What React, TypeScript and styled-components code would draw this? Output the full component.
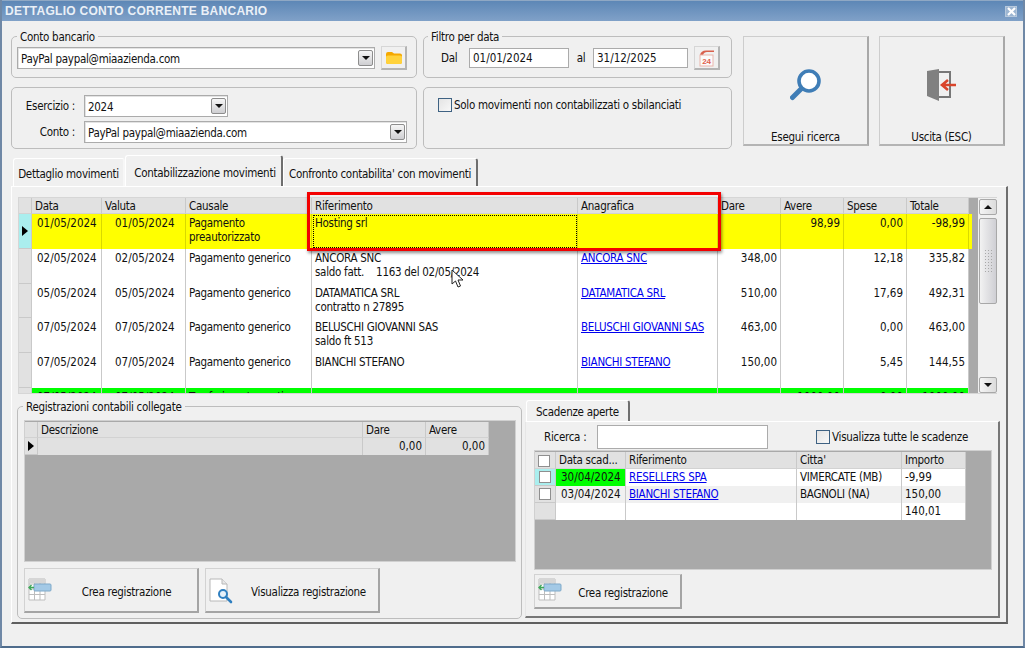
import React from "react";
import styled, { createGlobalStyle } from "styled-components";

const MAIN_COLS = "13px 70px 84px 126px 266px 140px 63px 63px 63px 62px";
const LINKED_COLS = "13px 325px 63px 63px";
const DUE_COLS = "21px 70px 171px 105px 64px";

const movements = [
  { data: "02/05/2024", valuta: "02/05/2024", causale: "Pagamento generico", rif: ["ANCORA SNC", "saldo fatt.    1163 del 02/05/2024"], ana: "ANCORA SNC", dare: "348,00", spese: "12,18", totale: "335,82" },
  { data: "05/05/2024", valuta: "05/05/2024", causale: "Pagamento generico", rif: ["DATAMATICA SRL", "contratto n 27895"], ana: "DATAMATICA SRL", dare: "510,00", spese: "17,69", totale: "492,31" },
  { data: "07/05/2024", valuta: "07/05/2024", causale: "Pagamento generico", rif: ["BELUSCHI GIOVANNI SAS", "saldo ft 513"], ana: "BELUSCHI GIOVANNI SAS", dare: "463,00", spese: "0,00", totale: "463,00" },
  { data: "07/05/2024", valuta: "07/05/2024", causale: "Pagamento generico", rif: ["BIANCHI STEFANO"], ana: "BIANCHI STEFANO", dare: "150,00", spese: "5,45", totale: "144,55" },
];

const FolderIcon = () => (
  <svg width="18" height="14" viewBox="0 0 18 14">
    <path d="M1 3 Q1 1 3 1 H7 L9 2.5 H15 Q17 2.5 17 4.5 V11 Q17 13 15 13 H3 Q1 13 1 11 Z" fill="#f5a800" />
    <path d="M1 6 Q1 4.5 3 4.5 H15 Q17 4.5 17 6 V11 Q17 13 15 13 H3 Q1 13 1 11 Z" fill="#ffd23c" />
  </svg>
);

const CalendarIcon = () => (
  <svg width="18" height="18" viewBox="0 0 18 18">
    <path d="M2 6 Q3 1.5 8 1.5 H16 V3 H9 Q6 3 5 6 Z" fill="#d9604c" />
    <rect x="2" y="6" width="13" height="11" fill="#fbfbfb" stroke="#e9b5ac" />
    <text x="8.5" y="14.5" textAnchor="middle" fontSize="8" fontWeight="bold" fill="#e0604c" fontFamily="Liberation Sans, sans-serif">24</text>
  </svg>
);

const SearchIcon = () => (
  <svg width="32" height="34" viewBox="0 0 32 34">
    <circle cx="19" cy="13" r="10" fill="#fff" stroke="#3f7db6" strokeWidth="3.6" />
    <path d="M10.5 21.5 L2.5 29.5" stroke="#3f7db6" strokeWidth="5" strokeLinecap="round" />
  </svg>
);

const ExitIcon = () => (
  <svg width="32" height="34" viewBox="0 0 32 34">
    <path d="M13 4 H24 V29 H13" fill="none" stroke="#777" strokeWidth="2" />
    <path d="M1 3 L13 1 V33 L1 28 Z" fill="#808080" />
    <path d="M30 17 H17 M22 12 L16 17 L22 22" fill="none" stroke="#d9442b" strokeWidth="2.6" />
  </svg>
);

const TableAddIcon = () => (
  <svg width="24" height="23" viewBox="0 0 24 23">
    <path d="M1 1 H17 V22 H1 Z M1 6 H17 M1 11 H17 M1 16.5 H17 M6.5 1 V22 M12 1 V22" fill="#fff" stroke="#bdbdbd" />
    <rect x="1" y="1" width="16" height="4" fill="#d6d6d6" />
    <rect x="6" y="6" width="17" height="7" rx="1" fill="#a3c9e6" stroke="#7fa9c9" />
    <path d="M6 9.5 H1 M3.5 7 L1 9.5 L3.5 12" fill="none" stroke="#3fa85a" strokeWidth="1.4" />
  </svg>
);

const DocSearchIcon = () => (
  <svg width="26" height="26" viewBox="0 0 26 26">
    <path d="M1 1 H13 L18 6 V23 H1 Z" fill="#fff" stroke="#b8b8b8" />
    <path d="M13 1 V6 H18" fill="#e8e8e8" stroke="#b8b8b8" />
    <circle cx="14" cy="16" r="4" fill="#e6f1fa" stroke="#2f7fc0" strokeWidth="2" />
    <path d="M17 19 L22 24" stroke="#2f7fc0" strokeWidth="2.6" strokeLinecap="round" />
  </svg>
);

const MouseCursor = () => (
  <svg width="14" height="19" viewBox="0 0 14 19">
    <path d="M1 1 V15 L4.5 12 L7 18 L9.5 17 L7 11 H12 Z" fill="#fff" stroke="#222" strokeWidth="1" />
  </svg>
);

export default function App() {
  return (
    <Window>
      <GlobalStyle />
      <TitleBar>
        DETTAGLIO CONTO CORRENTE BANCARIO
        <CloseBox>
          <svg width="9" height="9" viewBox="0 0 9 9">
            <path d="M1 1 L8 8 M8 1 L1 8" stroke="#fff" strokeWidth="2.2" />
          </svg>
        </CloseBox>
      </TitleBar>

      <Body>
        <TopSection>
          <FilterGrid>
            <Group $height={49} $padLeft={5} $legendLeft={0}>
              <legend>Conto bancario</legend>
              <ControlRow>
                <Combo $width={358} $height={22}>
                  PayPal paypal@miaazienda.com
                  <ComboArrow />
                </Combo>
                <IconButton $left={6}>
                  <FolderIcon />
                </IconButton>
              </ControlRow>
            </Group>

            <Group $height={49} $padLeft={17} $legendLeft={-13}>
              <legend>Filtro per data</legend>
              <ControlRow>
                <DateLabel $width={28}>Dal</DateLabel>
                <DateInput readOnly value="01/01/2024" $width={100} />
                <DateLabel $width={24} $center>al</DateLabel>
                <DateInput readOnly value="31/12/2025" $width={95} />
                <IconButton $left={6}>
                  <CalendarIcon />
                </IconButton>
              </ControlRow>
            </Group>

            <PlainBox>
              <FormGrid>
                <FormLabel>Esercizio :</FormLabel>
                <Combo $width={144} $height={22}>
                  2024
                  <ComboArrow />
                </Combo>
                <FormLabel>Conto :</FormLabel>
                <Combo $width={323} $height={22}>
                  PayPal paypal@miaazienda.com
                  <ComboArrow />
                </Combo>
              </FormGrid>
            </PlainBox>

            <PlainBox>
              <CheckRow>
                <CheckBox $accent />
                Solo movimenti non contabilizzati o sbilanciati
              </CheckRow>
            </PlainBox>
          </FilterGrid>

          <BigButton $left={11}>
            <SearchIcon />
            <span>Esegui ricerca</span>
          </BigButton>
          <BigButton $left={10}>
            <ExitIcon />
            <span>Uscita (ESC)</span>
          </BigButton>
        </TopSection>

        <TabStrip>
          <Tab $width={112} $height={28}>Dettaglio movimenti</Tab>
          <Tab $width={158} $height={31} $dark $active>Contabilizzazione movimenti</Tab>
          <Tab $width={195} $height={28} $dark>Confronto contabilita' con movimenti</Tab>
        </TabStrip>

        <TabPanel>
          <GridFrame>
            <GridBody>
              <Row $cols={MAIN_COLS}>
                <HeaderCell />
                <HeaderCell>Data</HeaderCell>
                <HeaderCell>Valuta</HeaderCell>
                <HeaderCell>Causale</HeaderCell>
                <HeaderCell>Riferimento</HeaderCell>
                <HeaderCell>Anagrafica</HeaderCell>
                <HeaderCell>Dare</HeaderCell>
                <HeaderCell>Avere</HeaderCell>
                <HeaderCell>Spese</HeaderCell>
                <HeaderCell>Totale</HeaderCell>
              </Row>

              <YellowRow $cols={MAIN_COLS}>
                <Indicator $current $selected />
                <Cell $num $bg="#ffff00" $line="#d9d900" $left={5}>01/05/2024</Cell>
                <Cell $num $bg="#ffff00" $line="#d9d900" $left={13}>01/05/2024</Cell>
                <Cell $bg="#ffff00" $line="#d9d900" $left={3}>Pagamento<br />preautorizzato</Cell>
                <FocusCell>Hosting srl</FocusCell>
                <Cell $bg="#ffff00" $line="#d9d900" />
                <Cell $bg="#ffff00" $line="#d9d900" />
                <Cell $num $bg="#ffff00" $line="#d9d900" $right>98,99</Cell>
                <Cell $num $bg="#ffff00" $line="#d9d900" $right>0,00</Cell>
                <Cell $num $bg="#ffff00" $line="#d9d900" $right>-98,99</Cell>
              </YellowRow>

              {movements.map((m, i) => (
                <Row $cols={MAIN_COLS} key={i}>
                  <Indicator />
                  <Cell $num $left={5}>{m.data}</Cell>
                  <Cell $num $left={13}>{m.valuta}</Cell>
                  <Cell $left={3}>{m.causale}</Cell>
                  <Cell $left={3}>
                    {m.rif.map((line) => (
                      <div key={line}>{line}</div>
                    ))}
                  </Cell>
                  <Cell $left={3}><Link>{m.ana}</Link></Cell>
                  <Cell $num $right>{m.dare}</Cell>
                  <Cell $right />
                  <Cell $num $right>{m.spese}</Cell>
                  <Cell $num $right>{m.totale}</Cell>
                </Row>
              ))}

              <Row $cols={MAIN_COLS}>
                <Indicator />
                <Cell $num $bg="#00ff00" $left={5}>07/05/2024</Cell>
                <Cell $num $bg="#00ff00" $left={13}>07/05/2024</Cell>
                <Cell $bg="#00ff00" $left={3}>Trasferimento conti</Cell>
                <Cell $bg="#00ff00" />
                <Cell $bg="#00ff00" />
                <Cell $bg="#00ff00" />
                <Cell $num $bg="#00ff00" $right>1000,00</Cell>
                <Cell $num $bg="#00ff00" $right>0,00</Cell>
                <Cell $num $bg="#00ff00" $right>-1000,00</Cell>
              </Row>
            </GridBody>

            <ScrollBar>
              <ScrollArrow $up />
              <ScrollThumb>
                <ThumbGrip />
              </ScrollThumb>
              <ScrollArrow />
            </ScrollBar>

            <Highlight />
            <CursorMark>
              <MouseCursor />
            </CursorMark>
          </GridFrame>

          <LowerSection>
            <Group $height={220} $width={505} $padLeft={6} $legendLeft={-1}>
              <legend>Registrazioni contabili collegate</legend>
              <DarkGrid $width={492} $height={142} $top={6}>
                <Row $cols={LINKED_COLS}>
                  <HeaderCell />
                  <HeaderCell>Descrizione</HeaderCell>
                  <HeaderCell>Dare</HeaderCell>
                  <HeaderCell>Avere</HeaderCell>
                </Row>
                <Row $cols={LINKED_COLS}>
                  <Indicator $current $compact />
                  <Cell $bg="#e1e1e1" $compact />
                  <Cell $num $bg="#e1e1e1" $compact $right>0,00</Cell>
                  <Cell $num $bg="#e1e1e1" $compact $right>0,00</Cell>
                </Row>
              </DarkGrid>
              <ButtonRow>
                <ActionButton $width={175} $height={45} $iconTop={9}>
                  <TableAddIcon />
                  <span>Crea registrazione</span>
                </ActionButton>
                <ActionButton $width={175} $height={45} $iconTop={9}>
                  <DocSearchIcon />
                  <span>Visualizza registrazione</span>
                </ActionButton>
              </ButtonRow>
            </Group>

            <DueColumn>
              <SmallTab>Scadenze aperte</SmallTab>
              <DuePanel>
                <SearchRow>
                  <SearchLabel>Ricerca :</SearchLabel>
                  <SearchInput readOnly value="" />
                  <CheckRow $inline>
                    <CheckBox $accent />
                    Visualizza tutte le scadenze
                  </CheckRow>
                </SearchRow>
                <DarkGrid $width={458} $height={120} $top={1}>
                  <Row $cols={DUE_COLS}>
                    <HeaderCell $compact><CheckBox /></HeaderCell>
                    <HeaderCell $compact>Data scad...</HeaderCell>
                    <HeaderCell $compact>Riferimento</HeaderCell>
                    <HeaderCell $compact>Citta'</HeaderCell>
                    <HeaderCell $compact>Importo</HeaderCell>
                  </Row>
                  <Row $cols={DUE_COLS}>
                    <Indicator $selected $compact><CheckBox /></Indicator>
                    <Cell $num $compact $bg="#00ff00" $left={5}>30/04/2024</Cell>
                    <Cell $compact $left={3}><Link>RESELLERS SPA</Link></Cell>
                    <Cell $compact $left={3}>VIMERCATE (MB)</Cell>
                    <Cell $num $compact $left={3}>-9,99</Cell>
                  </Row>
                  <Row $cols={DUE_COLS}>
                    <Indicator $compact><CheckBox /></Indicator>
                    <Cell $num $compact $bg="#f0f0f0" $left={5}>03/04/2024</Cell>
                    <Cell $compact $bg="#f0f0f0" $left={3}><Link>BIANCHI STEFANO</Link></Cell>
                    <Cell $compact $bg="#f0f0f0" $left={3}>BAGNOLI (NA)</Cell>
                    <Cell $num $compact $bg="#f0f0f0" $left={3}>150,00</Cell>
                  </Row>
                  <Row $cols={DUE_COLS}>
                    <Indicator $compact />
                    <Cell $compact />
                    <Cell $compact />
                    <Cell $compact />
                    <Cell $num $compact $left={3}>140,01</Cell>
                  </Row>
                </DarkGrid>
                <DueButtonRow>
                  <ActionButton $width={148} $height={35} $iconTop={3}>
                    <TableAddIcon />
                    <span>Crea registrazione</span>
                  </ActionButton>
                </DueButtonRow>
              </DuePanel>
            </DueColumn>
          </LowerSection>
        </TabPanel>
      </Body>
    </Window>
  );
}

const GlobalStyle = createGlobalStyle`
  html, body {
    margin: 0;
    padding: 0;
    overflow: hidden;
    background: #f0f0f0;
  }
  * {
    box-sizing: border-box;
  }
`;

const Window = styled.div`
  position: relative;
  width: 1025px;
  height: 648px;
  display: flex;
  flex-direction: column;
  background: #f0f0f0;
  border-left: 2px solid #6f88a6;
  border-right: 2px solid #6f88a6;
  border-bottom: 2px solid #4f6c8c;
  font-family: "DejaVu Sans Condensed", "DejaVu Sans", "Liberation Sans", sans-serif;
  font-stretch: condensed;
  font-size: 11.5px;
  letter-spacing: -0.28px;
  color: #111;
`;

const TitleBar = styled.div`
  height: 21px;
  flex: none;
  display: flex;
  align-items: center;
  justify-content: space-between;
  padding: 0 6px 0 3px;
  background: linear-gradient(#5d87b6, #80a1c8);
  border-top: 1px solid #8fa8c4;
  color: #eaf0f7;
  font-family: "Liberation Sans", sans-serif;
  font-size: 12px;
  font-stretch: normal;
  font-weight: bold;
  letter-spacing: 0.27px;
`;

const CloseBox = styled.div`
  width: 12px;
  height: 11px;
  display: flex;
  align-items: center;
  justify-content: center;
  background: #9db6d2;
  border: 1px solid #b6c8dc;
`;

const Body = styled.div`
  flex: 1;
  padding: 8px 0 0 9px;
`;

const TopSection = styled.div`
  display: flex;
  height: 120px;
`;

const FilterGrid = styled.div`
  display: grid;
  grid-template-columns: 406px 309px;
  grid-template-rows: 48px 62px;
  column-gap: 6px;
  row-gap: 10px;
`;

const Group = styled.fieldset<{ $height: number; $width?: number; $padLeft: number; $legendLeft: number }>`
  margin: 0;
  min-width: 0;
  height: ${(p) => p.$height}px;
  width: ${(p) => (p.$width ? `${p.$width}px` : "auto")};
  padding: 0 0 0 ${(p) => p.$padLeft}px;
  border: 1px solid #bdbdbd;
  border-radius: 5px;

  legend {
    margin-left: ${(p) => p.$legendLeft}px;
    padding: 1px 3px 0;
    line-height: 14px;
  }
`;

const PlainBox = styled.div`
  border: 1px solid #bdbdbd;
  border-radius: 5px;
`;

const ControlRow = styled.div`
  display: flex;
  align-items: center;
  padding-top: 2px;
`;

const Combo = styled.div<{ $width: number; $height: number }>`
  position: relative;
  width: ${(p) => p.$width}px;
  height: ${(p) => p.$height}px;
  line-height: ${(p) => p.$height}px;
  padding-left: 3px;
  background: #fff;
  border: 1px solid #ababab;
  box-shadow: inset 1px 1px 0 #e3e3e3;
`;

const ComboArrow = styled.div`
  position: absolute;
  top: 2px;
  right: 1px;
  width: 15px;
  height: 16px;
  border: 1px solid #8d8d8d;
  border-radius: 2px;
  background: linear-gradient(#f6f6f6, #cfcfd2);

  &::after {
    content: "";
    position: absolute;
    left: 3px;
    top: 5px;
    border-left: 4px solid transparent;
    border-right: 4px solid transparent;
    border-top: 4px solid #111;
  }
`;

const IconButton = styled.div<{ $left: number }>`
  width: 26px;
  height: 24px;
  margin-left: ${(p) => p.$left}px;
  display: flex;
  align-items: center;
  justify-content: center;
  background: #f0f0f0;
  border-top: 1px solid #d6d6d6;
  border-left: 1px solid #d6d6d6;
  border-right: 2px solid #b4b4b4;
  border-bottom: 2px solid #b4b4b4;
`;

const DateLabel = styled.span<{ $width: number; $center?: boolean }>`
  width: ${(p) => p.$width}px;
  text-align: ${(p) => (p.$center ? "center" : "left")};
`;

const DateInput = styled.input<{ $width: number }>`
  width: ${(p) => p.$width}px;
  height: 20px;
  padding: 0 3px;
  font: inherit;
  letter-spacing: 0;
  color: #111;
  background: #fff;
  border: 1px solid #ababab;
  border-radius: 0;
  outline: none;
`;

const FormGrid = styled.div`
  display: grid;
  grid-template-columns: 63px 323px;
  column-gap: 9px;
  row-gap: 4px;
  align-items: center;
  padding-top: 7px;
`;

const FormLabel = styled.span`
  text-align: right;
`;

const CheckRow = styled.div<{ $inline?: boolean }>`
  display: flex;
  align-items: center;
  gap: 2px;
  margin-left: ${(p) => (p.$inline ? "48px" : "14px")};
  padding-top: ${(p) => (p.$inline ? "0" : "10px")};
`;

const CheckBox = styled.div<{ $accent?: boolean }>`
  width: ${(p) => (p.$accent ? "14px" : "12px")};
  height: ${(p) => (p.$accent ? "14px" : "12px")};
  flex: none;
  border: 1px solid ${(p) => (p.$accent ? "#3f6283" : "#8f8f8f")};
  background: ${(p) => (p.$accent ? "linear-gradient(135deg, #e4e4e4, #f8f8f8)" : "#fff")};
`;

const BigButton = styled.div<{ $left: number }>`
  width: 126px;
  height: 110px;
  margin: 7px 0 0 ${(p) => p.$left}px;
  padding: 31px 0 0;
  display: flex;
  flex-direction: column;
  align-items: center;
  justify-content: space-between;
  background: #f0f0f0;
  border-top: 1px solid #cdcdcd;
  border-left: 1px solid #cdcdcd;
  border-right: 2px solid #a8a8a8;
  border-bottom: 2px solid #b4b4b4;
`;

const TabStrip = styled.div`
  display: flex;
  align-items: flex-end;
  height: 31px;
  margin-top: 6px;
  padding-left: 2px;
`;

const Tab = styled.div<{ $width: number; $height: number; $dark?: boolean; $active?: boolean }>`
  width: ${(p) => p.$width}px;
  height: ${(p) => p.$height}px;
  padding: 3px 0 0 ${(p) => (p.$active ? "3px" : "0")};
  display: flex;
  align-items: center;
  justify-content: center;
  white-space: nowrap;
  background: #f0f0f0;
  border-top: 1px solid #fff;
  border-left: 1px solid #fff;
  border-right: 2px solid ${(p) => (p.$dark ? "#6e6e6e" : "#f7f7f7")};
  border-radius: 3px 3px 0 0;
`;

const TabPanel = styled.div`
  width: 997px;
  height: 438px;
  padding: 10px 0 0 5px;
  background: #f0f0f0;
  border-top: 1px solid #fff;
  border-left: 1px solid #fff;
  border-right: 2px solid #6e6e6e;
  border-bottom: 2px solid #5f5f5f;
`;

const GridFrame = styled.div`
  position: relative;
  display: flex;
  width: 979px;
  height: 197px;
  margin-left: 1px;
  border: 1px solid #d6d6d6;
`;

const GridBody = styled.div`
  flex: none;
  width: 959px;
  height: 100%;
  overflow: hidden;
  background: #a9a9a9;
`;

const Row = styled.div<{ $cols: string }>`
  display: grid;
  grid-template-columns: ${(p) => p.$cols};
  width: fit-content;
`;

const YellowRow = styled(Row)`
  width: 953px;
  background: #ffff00;
`;

const HeaderCell = styled.div<{ $compact?: boolean }>`
  height: 16px;
  line-height: 15px;
  padding: 1px 0 0 3px;
  display: flex;
  align-items: center;
  overflow: hidden;
  white-space: nowrap;
  background: #e1e1e1;
  border-right: 1px solid #c9c9c9;
  border-bottom: 1px solid #d2d2d2;

  ${(p) => p.$compact && "height: 17px;"}
`;

const Indicator = styled.div<{ $current?: boolean; $selected?: boolean; $compact?: boolean }>`
  position: relative;
  height: ${(p) => (p.$compact ? "17px" : "34.75px")};
  display: flex;
  align-items: center;
  justify-content: center;
  background: ${(p) => (p.$selected ? "#aaeeee" : "#e1e1e1")};
  border-right: 1px solid #c9c9c9;
  border-bottom: 1px solid #c9c9c9;

  ${(p) =>
    p.$current &&
    `&::after {
      content: "";
      border-top: 5px solid transparent;
      border-bottom: 5px solid transparent;
      border-left: 6px solid #000;
    }`}
`;

const Cell = styled.div<{ $bg?: string; $line?: string; $left?: number; $right?: boolean; $compact?: boolean; $num?: boolean }>`
  height: ${(p) => (p.$compact ? "17px" : "34.75px")};
  line-height: 14px;
  padding: ${(p) => (p.$compact ? "1px" : "2px")} ${(p) => (p.$right ? "3px" : "0")} 0 ${(p) => p.$left ?? 0}px;
  text-align: ${(p) => (p.$right ? "right" : "left")};
  letter-spacing: ${(p) => (p.$num ? "0" : "inherit")};
  white-space: pre;
  overflow: hidden;
  background: ${(p) => p.$bg ?? "#fff"};
  border-right: 1px solid ${(p) => p.$line ?? "#c9c9c9"};
`;

const FocusCell = styled(Cell)`
  padding-left: 3px;
  background: #ffff00;
  border-right-color: #d9d900;
  outline: 1px dotted #000;
  outline-offset: -2px;
`;

const Link = styled.span`
  color: #0000ee;
  text-decoration: underline;
`;

const ScrollBar = styled.div`
  flex: none;
  width: 19px;
  height: 100%;
  padding: 1px 0 0 1px;
  display: flex;
  flex-direction: column;
  align-items: stretch;
  background: #f0f0f0;
`;

const ScrollArrow = styled.div<{ $up?: boolean }>`
  height: 16px;
  flex: none;
  margin-top: ${(p) => (p.$up ? "0" : "auto")};
  display: flex;
  align-items: center;
  justify-content: center;
  border: 1px solid #a8a8a8;
  border-radius: 2px;
  background: linear-gradient(to right, #f4f4f4, #dcdcdc);

  &::after {
    content: "";
    border-left: 4px solid transparent;
    border-right: 4px solid transparent;
    ${(p) => (p.$up ? "border-bottom: 4px solid #111;" : "border-top: 4px solid #111;")}
  }
`;

const ScrollThumb = styled.div`
  height: 86px;
  flex: none;
  margin-top: 3px;
  display: flex;
  align-items: center;
  justify-content: center;
  border: 1px solid #a8a8a8;
  border-radius: 2px;
  background: linear-gradient(to right, #f2f2f2, #cfcfd4);
`;

const ThumbGrip = styled.div`
  width: 8px;
  height: 24px;
  background-image: radial-gradient(#a8a8a8 0.7px, transparent 0.8px);
  background-size: 3px 3px;
`;

const Highlight = styled.div`
  position: absolute;
  left: 288px;
  top: -6px;
  width: 414px;
  height: 59px;
  border: 3px solid #f30000;
  box-shadow: 1px 2px 3px rgba(0, 0, 0, 0.45);
  pointer-events: none;
`;

const CursorMark = styled.div`
  position: absolute;
  left: 432px;
  top: 71px;
  line-height: 0;
`;

const LowerSection = styled.div`
  display: flex;
  margin-top: 5px;
  gap: 3px;
`;

const DarkGrid = styled.div<{ $width: number; $height: number; $top: number }>`
  width: ${(p) => p.$width}px;
  height: ${(p) => p.$height}px;
  margin-top: ${(p) => p.$top}px;
  padding: 1px 0;
  background: #a9a9a9;
  border: 1px solid #d0d0d0;
`;

const ButtonRow = styled.div`
  display: flex;
  gap: 6px;
  margin-top: 6px;
`;

const ActionButton = styled.div<{ $width: number; $height: number; $iconTop: number }>`
  width: ${(p) => p.$width}px;
  height: ${(p) => p.$height}px;
  padding-left: 3px;
  display: flex;
  align-items: center;
  background: #f0f0f0;
  border-top: 1px solid #d2d2d2;
  border-left: 1px solid #d2d2d2;
  border-right: 2px solid #a4a4a4;
  border-bottom: 2px solid #a4a4a4;

  svg {
    flex: none;
    align-self: flex-start;
    margin-top: ${(p) => p.$iconTop}px;
  }

  span {
    flex: 1;
    padding: 3px 0 0 4px;
    text-align: center;
  }
`;

const DueColumn = styled.div`
  width: 475px;
  margin-top: 1px;
  display: flex;
  flex-direction: column;
  align-items: flex-start;
`;

const SmallTab = styled.div`
  width: 104px;
  height: 21px;
  margin-left: 1px;
  padding-top: 2px;
  display: flex;
  align-items: center;
  justify-content: center;
  background: #f0f0f0;
  border-top: 1px solid #fff;
  border-left: 1px solid #fff;
  border-right: 2px solid #6e6e6e;
  border-radius: 3px 3px 0 0;
`;

const DuePanel = styled.div`
  width: 475px;
  height: 197px;
  padding: 3px 0 0 8px;
  background: #f0f0f0;
  border-top: 1px solid #fff;
  border-left: 1px solid #e6e6e6;
  border-right: 2px solid #777;
  border-bottom: 2px solid #777;
`;

const SearchRow = styled.div`
  display: flex;
  align-items: center;
  height: 24px;
  padding-left: 10px;
`;

const SearchLabel = styled.span`
  width: 44px;
  white-space: nowrap;
`;

const SearchInput = styled.input`
  width: 171px;
  height: 24px;
  margin-left: 9px;
  padding: 0 3px;
  background: #fff;
  border: 1px solid #ababab;
  border-radius: 0;
  outline: none;
`;

const DueButtonRow = styled.div`
  margin-top: 4px;
`;
